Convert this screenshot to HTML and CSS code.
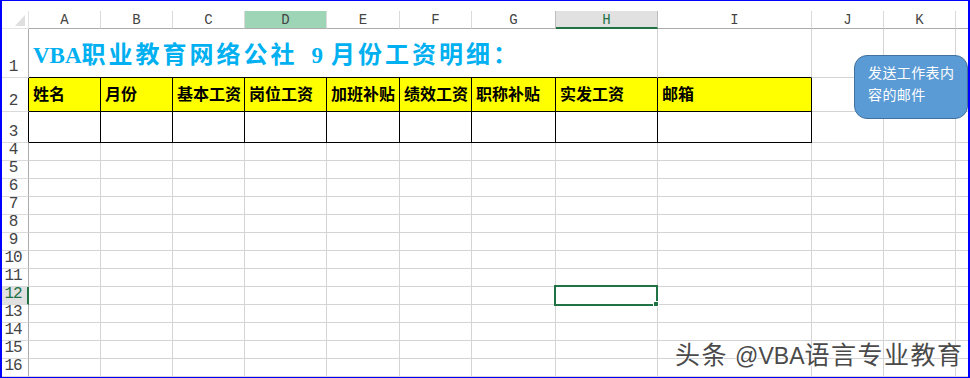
FILE: index.html
```html
<!DOCTYPE html>
<html lang="zh-CN">
<head>
<meta charset="utf-8">
<title>工资明细</title>
<link rel="stylesheet" href="styles.css">
</head>
<body>
<div class="frame">
  <div class="topstrip"></div>
  <div class="sheet">
    <div class="corner"><svg width="10" height="11" viewBox="0 0 10 11"><polygon points="10,0 10,11 0,11" fill="#dfdfdf"/></svg></div>
    <div class="ch">A</div><div class="ch">B</div><div class="ch">C</div><div class="ch hov">D</div><div class="ch">E</div><div class="ch">F</div><div class="ch pre">G</div><div class="ch sel">H</div><div class="ch">I</div><div class="ch">J</div><div class="ch">K</div><div class="ch last"></div>

    <div class="rh">1</div>
    <div class="c title"><span class="lat">VBA</span>职业教育网络公社<span class="lat nine">9</span>月份工资明细：</div>
    <div class="c bb"></div><div class="c bb"></div><div class="c"></div><div class="c"></div><div class="c last"></div>

    <div class="rh blk">2</div>
    <div class="c hd">姓名</div><div class="c hd">月份</div><div class="c hd">基本工资</div><div class="c hd">岗位工资</div><div class="c hd">加班补贴</div><div class="c hd">绩效工资</div><div class="c hd">职称补贴</div><div class="c hd">实发工资</div><div class="c hd">邮箱</div><div class="c"></div><div class="c"></div><div class="c last"></div>

    <div class="rh blk">3</div>
    <div class="c bx"></div><div class="c bx"></div><div class="c bx"></div><div class="c bx"></div><div class="c bx"></div><div class="c bx"></div><div class="c bx"></div><div class="c bx"></div><div class="c bx"></div><div class="c"></div><div class="c"></div><div class="c last"></div>

    <div class="rh">4</div><div class="c"></div><div class="c"></div><div class="c"></div><div class="c"></div><div class="c"></div><div class="c"></div><div class="c"></div><div class="c"></div><div class="c"></div><div class="c"></div><div class="c"></div><div class="c last"></div>
    <div class="rh">5</div><div class="c"></div><div class="c"></div><div class="c"></div><div class="c"></div><div class="c"></div><div class="c"></div><div class="c"></div><div class="c"></div><div class="c"></div><div class="c"></div><div class="c"></div><div class="c last"></div>
    <div class="rh">6</div><div class="c"></div><div class="c"></div><div class="c"></div><div class="c"></div><div class="c"></div><div class="c"></div><div class="c"></div><div class="c"></div><div class="c"></div><div class="c"></div><div class="c"></div><div class="c last"></div>
    <div class="rh">7</div><div class="c"></div><div class="c"></div><div class="c"></div><div class="c"></div><div class="c"></div><div class="c"></div><div class="c"></div><div class="c"></div><div class="c"></div><div class="c"></div><div class="c"></div><div class="c last"></div>
    <div class="rh">8</div><div class="c"></div><div class="c"></div><div class="c"></div><div class="c"></div><div class="c"></div><div class="c"></div><div class="c"></div><div class="c"></div><div class="c"></div><div class="c"></div><div class="c"></div><div class="c last"></div>
    <div class="rh">9</div><div class="c"></div><div class="c"></div><div class="c"></div><div class="c"></div><div class="c"></div><div class="c"></div><div class="c"></div><div class="c"></div><div class="c"></div><div class="c"></div><div class="c"></div><div class="c last"></div>
    <div class="rh">10</div><div class="c"></div><div class="c"></div><div class="c"></div><div class="c"></div><div class="c"></div><div class="c"></div><div class="c"></div><div class="c"></div><div class="c"></div><div class="c"></div><div class="c"></div><div class="c last"></div>
    <div class="rh">11</div><div class="c"></div><div class="c"></div><div class="c"></div><div class="c"></div><div class="c"></div><div class="c"></div><div class="c"></div><div class="c"></div><div class="c"></div><div class="c"></div><div class="c"></div><div class="c last"></div>
    <div class="rh sel">12</div><div class="c"></div><div class="c"></div><div class="c"></div><div class="c"></div><div class="c"></div><div class="c"></div><div class="c"></div><div class="c active"><span class="selbox"><span class="handle"></span></span></div><div class="c"></div><div class="c"></div><div class="c"></div><div class="c last"></div>
    <div class="rh">13</div><div class="c"></div><div class="c"></div><div class="c"></div><div class="c"></div><div class="c"></div><div class="c"></div><div class="c"></div><div class="c"></div><div class="c"></div><div class="c"></div><div class="c"></div><div class="c last"></div>
    <div class="rh">14</div><div class="c"></div><div class="c"></div><div class="c"></div><div class="c"></div><div class="c"></div><div class="c"></div><div class="c"></div><div class="c"></div><div class="c"></div><div class="c"></div><div class="c"></div><div class="c last"></div>
    <div class="rh">15</div><div class="c"></div><div class="c"></div><div class="c"></div><div class="c"></div><div class="c"></div><div class="c"></div><div class="c"></div><div class="c"></div><div class="c"></div><div class="c"></div><div class="c"></div><div class="c last"></div>
    <div class="rh">16</div><div class="c"></div><div class="c"></div><div class="c"></div><div class="c"></div><div class="c"></div><div class="c"></div><div class="c"></div><div class="c"></div><div class="c"></div><div class="c"></div><div class="c"></div><div class="c last"></div>
  </div>
  <div class="shape">发送工作表内<br>容的邮件</div>
  <div class="watermark">头条 <span class="wlat">@VBA</span>语言专业教育</div>
</div>
</body>
</html>
```
FILE: styles.css
```css
html, body {
  margin: 0;
  padding: 0;
  background: #ffffff;
}

.frame {
  position: relative;
  width: 970px;
  height: 378px;
  box-sizing: border-box;
  border-style: solid;
  border-color: #0000ff;
  border-width: 1px 2px 1px 2px;
  overflow: hidden;
  background: #ffffff;
  font-family: "Noto Sans CJK SC", sans-serif;
}

.topstrip {
  height: 10px;
}

.sheet {
  display: grid;
  grid-template-columns: 27px 72px 72px 72px 82px 73px 72px 84px 102px 154px 72px 72px 1fr;
  grid-template-rows: 18px 49px 34px 31px repeat(13, 18px);
}

.sheet > div {
  box-sizing: border-box;
  min-width: 0;
}

.corner {
  border-right: 1px solid #e3e3e3;
  border-bottom: 1px solid #e3e3e3;
  display: flex;
  align-items: flex-end;
  justify-content: flex-end;
  padding: 0 3px 2px 0;
}
.corner svg { display: block; }

.ch {
  border-right: 1px solid #dadada;
  border-bottom: 1px solid #ababab;
  display: flex;
  align-items: center;
  justify-content: center;
  font-family: "Liberation Mono", monospace;
  font-size: 14px;
  color: #444444;
  padding-top: 1px;
}
.ch.hov { background: #9fd5b7; }
.ch.pre { border-right-color: #bdbdbd; }
.ch.sel {
  background: #e1e1e1;
  color: #217346;
  border-right-color: #bdbdbd;
  border-bottom: 2px solid #217346;
}
.ch.last { border-right: none; }

.rh {
  border-right: 1px solid #ababab;
  border-bottom: 1px solid #dadada;
  display: flex;
  align-items: flex-end;
  justify-content: center;
  padding: 0 4px 1px 0;
  font-family: "Liberation Mono", monospace;
  font-size: 16px;
  line-height: 17px;
  letter-spacing: -1px;
  color: #444444;
}
.rh.blk { border-right-color: #000000; }
.rh.sel {
  background: #e1e1e1;
  color: #217346;
  border-right: 2px solid #217346;
  padding-right: 3px;
}

.c {
  border-right: 1px solid #d4d4d4;
  border-bottom: 1px solid #d4d4d4;
}
.c.last { border-right: none; }

.c.title {
  grid-column: span 7;
  border-right: none;
  border-bottom: 1px solid #000000;
  white-space: nowrap;
  color: #00b0f0;
  font-weight: 700;
  font-size: 24px;
  line-height: 24px;
  letter-spacing: 3px;
  padding: 12px 0 0 4px;
}
.lat {
  font-family: "Liberation Serif", serif;
  font-size: 23px;
  letter-spacing: 0;
}
.nine {
  margin: 0 8px 0 14px;
}

.c.bb { border-bottom-color: #000000; }

.c.hd {
  background: #ffff00;
  border-right-color: #000000;
  border-bottom-color: #000000;
  display: flex;
  align-items: center;
  padding: 0 0 3px 4px;
  white-space: nowrap;
  overflow: hidden;
  font-weight: 700;
  font-size: 16px;
  color: #000000;
}
.c.bx {
  border-right-color: #000000;
  border-bottom-color: #000000;
}

.c.active { position: relative; }
.selbox {
  position: absolute;
  left: -2px;
  top: -2px;
  width: 104px;
  height: 21px;
  box-sizing: border-box;
  border: 2px solid #217346;
}
.handle {
  position: absolute;
  right: -3px;
  bottom: -3px;
  width: 6px;
  height: 6px;
  background: #217346;
  border: 1px solid #ffffff;
  box-sizing: border-box;
}

.shape {
  position: absolute;
  left: 852px;
  top: 54px;
  width: 114px;
  height: 64px;
  box-sizing: border-box;
  background: #5b9bd5;
  border: 1px solid #41719c;
  border-radius: 13px;
  color: #ffffff;
  font-size: 14px;
  line-height: 22px;
  letter-spacing: 0.4px;
  padding: 5px 0 0 13px;
}

.watermark {
  position: absolute;
  left: 673px;
  top: 339px;
  font-size: 25px;
  line-height: 26px;
  letter-spacing: 1.5px;
  color: #4a4a4a;
  white-space: nowrap;
  text-shadow: 1px 1px 0 #ffffff, -1px 0 0 #ffffff;
}
.wlat {
  font-family: "Liberation Sans", sans-serif;
  font-size: 23px;
  letter-spacing: 0;
}
```
